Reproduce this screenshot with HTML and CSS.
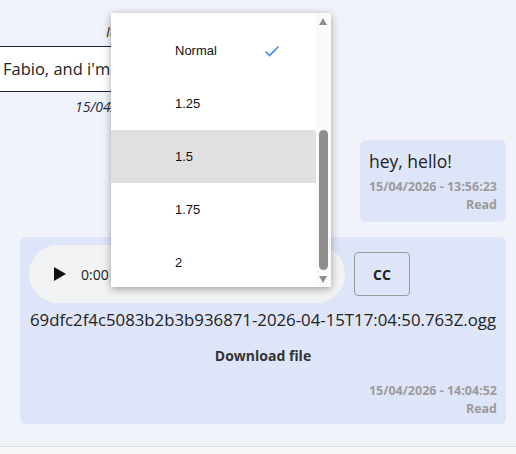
FILE: index.html
```html
<!DOCTYPE html>
<html lang="en">
<head>
  <meta charset="UTF-8">
  <title>Chat</title>
  <link rel="stylesheet" href="styles.css">
</head>
<body>
  <div class="chat">
    <div class="msg them">
      <div class="author">Italo Admin</div>
      <div class="edit-box">Fabio, and i'm here to help you today</div>
      <div class="stamp">15/04/2026 - 13:45:10</div>
    </div>

    <div class="msg me">
      <div class="bubble">
        <div class="text">hey, hello!</div>
        <div class="meta">15/04/2026 - 13:56:23</div>
        <div class="meta">Read</div>
      </div>
    </div>

    <div class="msg me wide">
      <div class="bubble">
        <div class="player-row">
          <div class="player">
            <svg class="play" width="14" height="16" viewBox="0 0 14 16"><path d="M1 1 L13 8 L1 15 Z" fill="#111"/></svg>
            <span class="time">0:00 / 0:07</span>
          </div>
          <button class="cc">CC</button>
        </div>
        <div class="filename">69dfc2f4c5083b2b3b936871-2026-04-15T17:04:50.763Z.ogg</div>
        <a class="download">Download file</a>
        <div class="meta">15/04/2026 - 14:04:52</div>
        <div class="meta">Read</div>
      </div>
    </div>
  </div>
  <div class="composer"></div>

  <!-- playback speed menu, open -->
  <div class="speed-menu">
    <ul class="speed-list">
      <li>Normal <svg class="tick" width="16" height="12" viewBox="0 0 16 12"><path d="M1.5 6.5 L5.5 10.5 L14.5 1.5" fill="none" stroke="#4a86e8" stroke-width="1.6"/></svg></li>
      <li>1.25</li>
      <li class="hover">1.5</li>
      <li>1.75</li>
      <li>2</li>
    </ul>
    <div class="scroll">
      <span class="arrow up"></span>
      <span class="thumb"></span>
      <span class="arrow down"></span>
    </div>
  </div>
</body>
</html>
```

FILE: styles.css
```css
body {
  margin: 0;
  background: #f0f3f9;
  font-family: 'Open Sans', sans-serif;
  color: #222;
  height: 454px;
  overflow: hidden;
  position: relative;
}

.chat {
  height: 446px;
  padding: 22px 10px 0 0;
  box-sizing: border-box;
}

.msg {
  display: flex;
}

.msg.me {
  justify-content: flex-end;
}

.msg.them {
  flex-direction: column;
  width: 250px;
  margin-left: -20px;
}

.author {
  font-style: italic;
  font-size: 14px;
  color: #1f2a44;
  padding-left: 126px;
  height: 24px;
}

.edit-box {
  background: #fff;
  border: 1px solid #1c2540;
  height: 44px;
  line-height: 44px;
  padding-left: 22px;
  font-size: 16.5px;
  white-space: nowrap;
  overflow: hidden;
}

.stamp {
  font-style: italic;
  font-size: 14px;
  color: #1f2a44;
  padding-left: 95px;
  margin-top: 5px;
}

.bubble {
  background: #dfe5f8;
  border-radius: 6px;
  padding: 9px 9px 8px;
}

.msg.me .bubble {
  margin-top: 24px;
  margin-bottom: 15px;
}

.msg.wide .bubble {
  margin: 0;
  width: 486px;
  box-sizing: border-box;
  padding: 8px 9px 6px;
}

.text {
  font-size: 17.5px;
  margin-bottom: 5px;
}

.meta {
  font-size: 12.5px;
  font-weight: bold;
  color: #9b9b9b;
  text-align: right;
  line-height: 18px;
}

.player-row {
  display: flex;
  align-items: center;
  gap: 9px;
}

.player {
  width: 316px;
  height: 58px;
  background: #f1f3f4;
  border-radius: 29px;
  display: flex;
  align-items: center;
  padding-left: 24px;
  box-sizing: border-box;
  font-family: 'Open Sans', sans-serif;
  font-size: 14px;
  color: #222;
}

.play {
  margin-right: 14px;
}

.cc {
  width: 56px;
  height: 44px;
  background: transparent;
  border: 1px solid #9a9a9a;
  border-radius: 4px;
  font-family: 'Open Sans', sans-serif;
  font-weight: bold;
  font-size: 14px;
  color: #222;
}

.filename {
  font-size: 16.8px;
  text-align: center;
  margin-top: 5px;
}

.download {
  display: block;
  text-align: center;
  font-weight: bold;
  font-size: 14px;
  color: #333;
  margin: 15px 0 17px;
}

.composer {
  height: 8px;
  border-top: 1px solid #dcdee4;
  background: #f7f8fa;
}

.speed-menu {
  position: absolute;
  left: 111px;
  top: 13px;
  width: 220px;
  height: 274px;
  background: #fff;
  box-shadow: 0 2px 8px rgba(0, 0, 0, 0.35);
  display: flex;
  overflow: hidden;
  font-family: 'Liberation Sans', sans-serif;
  font-size: 13px;
  color: #111;
}

.speed-list {
  list-style: none;
  margin: 0;
  padding: 11px 0 0;
  flex: 1;
}

.speed-list li {
  height: 53px;
  display: flex;
  align-items: center;
  padding-left: 64px;
}

.speed-list li.hover {
  background: #e0e0e0;
}

.tick {
  margin-left: 47px;
}

.scroll {
  width: 15px;
  background: #fafafa;
  position: relative;
}

.thumb {
  position: absolute;
  left: 3px;
  top: 117px;
  width: 9px;
  height: 140px;
  border-radius: 5px;
  background: #8e8e8e;
}

.arrow {
  position: absolute;
  left: 3px;
  width: 0;
  height: 0;
  border-left: 4.5px solid transparent;
  border-right: 4.5px solid transparent;
}

.arrow.up {
  top: 5px;
  border-bottom: 7px solid #8e8e8e;
}

.arrow.down {
  bottom: 4px;
  border-top: 7px solid #8e8e8e;
}
```
